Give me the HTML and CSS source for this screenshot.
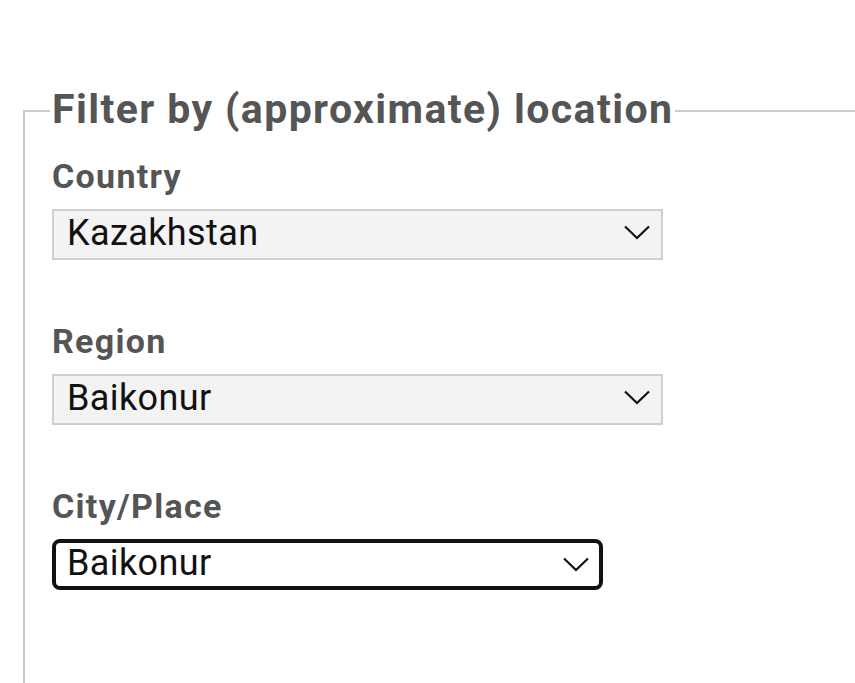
FILE: index.html
```html
<!DOCTYPE html>
<html>
<head>
<meta charset="utf-8">
<link rel="stylesheet" href="styles.css">
</head>
<body>
<fieldset class="filter">
  <legend class="filter-title">Filter by (approximate) location</legend>
  <div class="field">
    <div class="field-label">Country</div>
    <div class="select wide">
      <span class="select-value">Kazakhstan</span>
      <svg class="chev" width="26" height="15" viewBox="0 0 26 15"><path d="M1 1.5 L13 13 L25 1.5" fill="none" stroke="#111" stroke-width="2.2"/></svg>
    </div>
  </div>
  <div class="field">
    <div class="field-label">Region</div>
    <div class="select wide">
      <span class="select-value">Baikonur</span>
      <svg class="chev" width="26" height="15" viewBox="0 0 26 15"><path d="M1 1.5 L13 13 L25 1.5" fill="none" stroke="#111" stroke-width="2.2"/></svg>
    </div>
  </div>
  <div class="field">
    <div class="field-label">City/Place</div>
    <div class="select focused">
      <span class="select-value">Baikonur</span>
      <svg class="chev" width="26" height="15" viewBox="0 0 26 15"><path d="M1 1.5 L13 13 L25 1.5" fill="none" stroke="#111" stroke-width="2.2"/></svg>
    </div>
  </div>
</fieldset>
</body>
</html>
```
FILE: styles.css
```css
html, body {
  margin: 0;
  padding: 0;
  background: #fff;
  overflow: hidden;
  height: 683px;
}
body {
  font-family: Roboto, "Liberation Sans", sans-serif;
}
.filter {
  margin: 89px 0 0 23px;
  width: 900px;
  min-height: 700px;
  border: 2px solid #cbcbcb;
  padding: 0 0 0 27px;
  box-sizing: border-box;
}
.filter-title {
  padding: 0 2px 4px 2px;
  margin-left: -2px;
  font-size: 41px;
  font-weight: 700;
  letter-spacing: 1.4px;
  color: #555;
  line-height: 40px;
}
.field {
  display: flex;
  flex-direction: column;
  align-items: flex-start;
  margin-bottom: 63px;
}
.field:first-of-type {
  margin-top: 25px;
}
.field-label {
  font-size: 34px;
  font-weight: 700;
  letter-spacing: 1.3px;
  color: #555;
  line-height: 36px;
  margin-bottom: 15px;
}
.select {
  display: flex;
  align-items: center;
  justify-content: space-between;
  box-sizing: border-box;
  height: 51px;
  padding: 0 11px 4px 13px;
  font-size: 36px;
  letter-spacing: 0.4px;
  color: #111;
}
.select.wide {
  width: 611px;
  background: #f3f3f3;
  border: 2px solid #cfcfcf;
}
.select.focused {
  width: 551px;
  background: #fff;
  border: 4px solid #111;
  border-radius: 8px;
  padding: 0 10px 0 11px;
}
.select-value {
  line-height: 1;
}
.chev {
  display: block;
}
.focused .select-value {
  margin-bottom: 4px;
}
```
